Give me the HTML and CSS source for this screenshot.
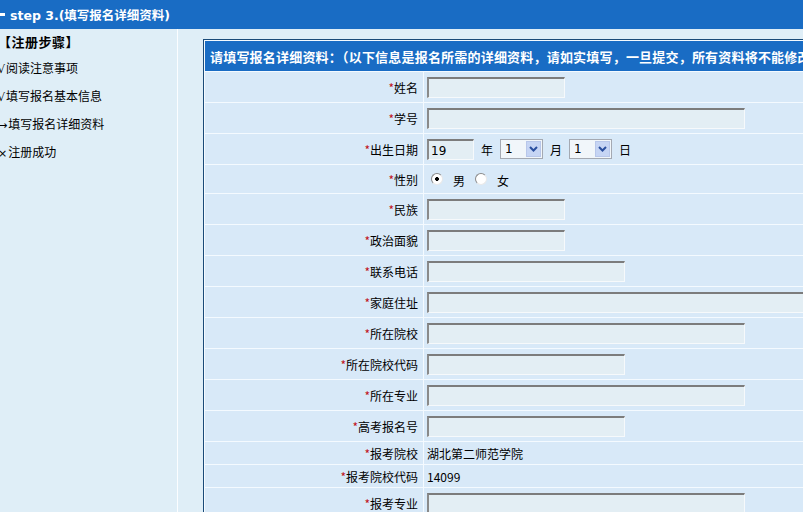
FILE: index.html
```html
<!DOCTYPE html>
<html lang="zh">
<head>
<meta charset="utf-8">
<title>step 3</title>
<link rel="stylesheet" href="styles.css">
</head>
<body>
<div class="topbar"><span class="bullet"></span><span class="step">step 3.(填写报名详细资料)</span></div>
<div class="main">
  <aside class="side">
    <div class="side-title">【注册步骤】</div>
    <div class="side-item"><span class="mk">√</span>阅读注意事项</div>
    <div class="side-item"><span class="mk">√</span>填写报名基本信息</div>
    <div class="side-item"><span class="mk">→</span>填写报名详细资料</div>
    <div class="side-item"><span class="mk">×</span>注册成功</div>
  </aside>
  <section class="content">
    <table class="form">
      <tr><th colspan="2">请填写报名详细资料：（以下信息是报名所需的详细资料，请如实填写，一旦提交，所有资料将不能修改）</th></tr>
      <tr class="r"><td class="lbl"><span class="req">*</span>姓名</td><td class="val"><input class="inp w-s" type="text"></td></tr>
      <tr class="r"><td class="lbl"><span class="req">*</span>学号</td><td class="val"><input class="inp w-l" type="text"></td></tr>
      <tr class="r"><td class="lbl"><span class="req">*</span>出生日期</td><td class="val">
        <div class="date">
          <input class="inp w-y" type="text" value="19">
          <span class="unit">年</span>
          <span class="sel"><span class="sel-v">1</span><span class="sel-btn"><svg width="9" height="6" viewBox="0 0 9 6"><path d="M1 1 L4.5 4.5 L8 1" fill="none" stroke="#2a4f9e" stroke-width="2"/></svg></span></span>
          <span class="unit">月</span>
          <span class="sel"><span class="sel-v">1</span><span class="sel-btn"><svg width="9" height="6" viewBox="0 0 9 6"><path d="M1 1 L4.5 4.5 L8 1" fill="none" stroke="#2a4f9e" stroke-width="2"/></svg></span></span>
          <span class="unit">日</span>
        </div>
      </td></tr>
      <tr class="g"><td class="lbl"><span class="req">*</span>性别</td><td class="val">
        <div class="radios">
          <input class="radio" type="radio" name="sex" checked><span class="rtxt">男</span>
          <input class="radio" type="radio" name="sex"><span class="rtxt">女</span>
        </div>
      </td></tr>
      <tr class="r"><td class="lbl"><span class="req">*</span>民族</td><td class="val"><input class="inp w-s" type="text"></td></tr>
      <tr class="r"><td class="lbl"><span class="req">*</span>政治面貌</td><td class="val"><input class="inp w-s" type="text"></td></tr>
      <tr class="r"><td class="lbl"><span class="req">*</span>联系电话</td><td class="val"><input class="inp w-m" type="text"></td></tr>
      <tr class="r"><td class="lbl"><span class="req">*</span>家庭住址</td><td class="val"><input class="inp w-xl" type="text"></td></tr>
      <tr class="r"><td class="lbl"><span class="req">*</span>所在院校</td><td class="val"><input class="inp w-l" type="text"></td></tr>
      <tr class="r"><td class="lbl"><span class="req">*</span>所在院校代码</td><td class="val"><input class="inp w-m" type="text"></td></tr>
      <tr class="r"><td class="lbl"><span class="req">*</span>所在专业</td><td class="val"><input class="inp w-l" type="text"></td></tr>
      <tr class="r"><td class="lbl"><span class="req">*</span>高考报名号</td><td class="val"><input class="inp w-m" type="text"></td></tr>
      <tr class="t"><td class="lbl"><span class="req">*</span>报考院校</td><td class="val">湖北第二师范学院</td></tr>
      <tr class="t"><td class="lbl"><span class="req">*</span>报考院校代码</td><td class="val">14099</td></tr>
      <tr class="r"><td class="lbl"><span class="req">*</span>报考专业</td><td class="val"><input class="inp w-l" type="text"></td></tr>
    </table>
  </section>
</div>
</body>
</html>
```
FILE: styles.css
```css
html, body {
  margin: 0;
  padding: 0;
  width: 803px;
  height: 512px;
  overflow: hidden;
  background: #dfeef7;
  font-family: "Noto Sans CJK SC", "DejaVu Sans", sans-serif;
  font-size: 12px;
  color: #000;
}

.topbar {
  height: 29px;
  background: #196cc4;
  display: flex;
  align-items: center;
  color: #fff;
}
.bullet {
  width: 5px;
  height: 3px;
  background: #fff;
  margin-right: 5px;
}
.step {
  font-family: "DejaVu Sans", "Noto Sans CJK SC", sans-serif;
  font-weight: bold;
  font-size: 12.5px;
  white-space: nowrap;
}

.main {
  display: flex;
  height: 483px;
}
.side {
  width: 177px;
  border-right: 1px solid #fbfdff;
  flex: none;
  padding-top: 1px;
}
.side-title {
  font-weight: bold;
  font-size: 13px;
  letter-spacing: 0.5px;
  height: 24px;
  line-height: 24px;
  margin-left: -2px;
}
.side-item {
  height: 28px;
  line-height: 28px;
  white-space: nowrap;
}
.side-item .mk {
  font-family: "DejaVu Sans", sans-serif;
  font-size: 11px;
  margin-left: -2px;
  margin-right: 1px;
}

.content {
  padding: 10px 0 0 25px;
  flex: none;
}

.form {
  width: 780px;
  border: 1px solid #1a4a78;
  border-spacing: 1px;
  background: #f4faff;
}
.form th {
  background: #196cc4;
  color: #fff;
  font-weight: bold;
  font-size: 13px;
  letter-spacing: 0.2px;
  text-align: left;
  white-space: nowrap;
  height: 30px;
  padding: 0 0 0 5px;
}
.form td {
  background: #d8e9f8;
  padding: 0;
  white-space: nowrap;
}
.form td.lbl {
  width: 213px;
  padding-right: 5px;
  text-align: right;
}
.form td.val {
  padding-left: 3px;
}
.r td { height: 30px; }
.g td { height: 28px; }
.t td { height: 22px; }

.req {
  color: #c0141b;
}

.inp {
  box-sizing: border-box;
  height: 21px;
  margin: 0;
  padding: 2px 2px 0;
  border-top: 2px solid #7c7c7c;
  border-left: 2px solid #8a8a8a;
  border-right: 1px solid #f6f9fb;
  border-bottom: 1px solid #f6f9fb;
  background: #e3eef4;
  font-family: "DejaVu Sans", sans-serif;
  font-size: 12px;
  color: #000;
  display: block;
  outline: none;
}
.w-s { width: 138px; }
.w-m { width: 198px; }
.w-l { width: 318px; }
.w-xl { width: 420px; }
.w-y { width: 47px; }

.date {
  display: flex;
  align-items: center;
}
.unit {
  margin: 0 7px 0 7px;
}
.sel {
  box-sizing: border-box;
  width: 43px;
  height: 20px;
  border: 1px solid #a4a9b2;
  background: #f1f6fa;
  display: flex;
  align-items: stretch;
}
.sel-v {
  flex: 1;
  font-family: "DejaVu Sans", sans-serif;
  padding-left: 4px;
  line-height: 18px;
}
.sel-btn {
  width: 15px;
  margin: 1px;
  background: #c6d5f4;
  border: 1px solid #b8c7ea;
  display: flex;
  align-items: center;
  justify-content: center;
  box-sizing: border-box;
}

.radios {
  display: flex;
  align-items: center;
  padding-left: 4px;
}
.radio {
  appearance: none;
  -webkit-appearance: none;
  width: 12px;
  height: 12px;
  margin: 0;
  border-radius: 50%;
  border: 1px solid;
  border-color: #8a8a8a #e8e8e8 #e8e8e8 #8a8a8a;
  background: #fff;
  box-sizing: border-box;
}
.radio:checked {
  background: radial-gradient(circle, #000 0, #000 1.6px, #fff 2.2px);
}
.rtxt {
  margin: 0 10px 0 10px;
  position: relative;
  top: 1px;
}
```
